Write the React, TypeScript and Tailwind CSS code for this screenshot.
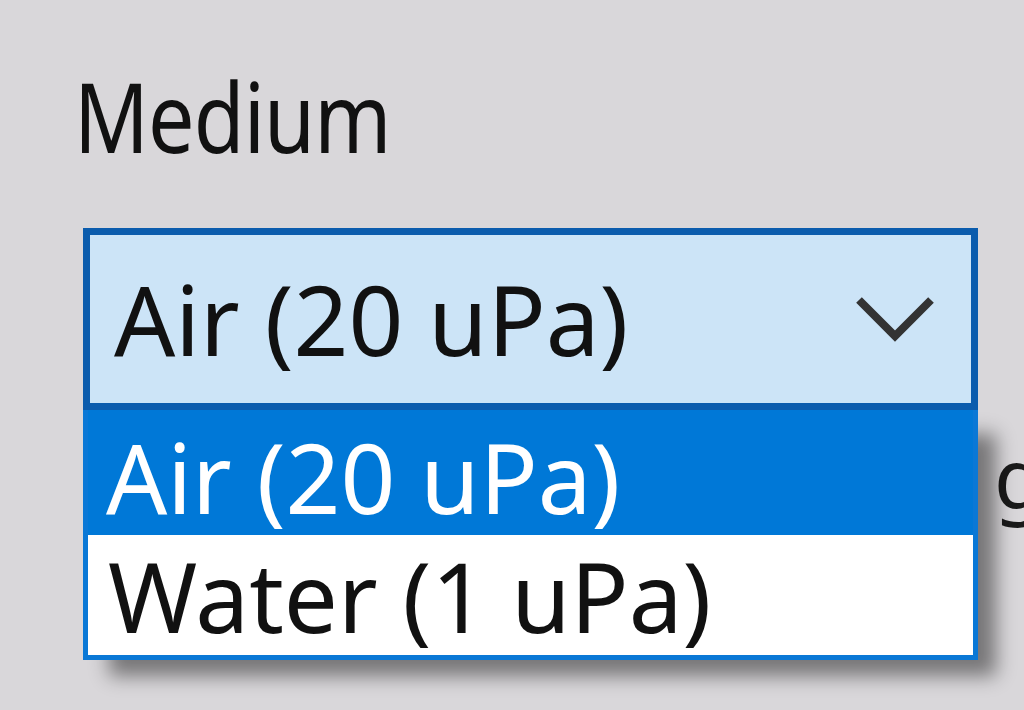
const font = { fontFamily: '"Noto Sans", "Open Sans", sans-serif' };

function Chevron() {
    return (
        <svg width="80" height="50" viewBox="0 0 80 50" fill="none" className="text-[#333]">
            <path
                d="M4 6 L40 42 L76 6"
                stroke="currentColor"
                strokeWidth="8"
                strokeLinejoin="miter"
            />
        </svg>
    );
}

export default function App() {
    const options = ["Air (20 uPa)", "Water (1 uPa)"];
    const selected = 0;

    return (
        <div
            className="relative h-[710px] w-[1024px] overflow-hidden bg-[#d9d7da] text-[96px] text-[#111]"
            style={font}
        >
            {/* label of the field behind the open list */}
            <span className="absolute left-[994px] top-[435px] text-[82px] leading-none text-[#1a1a1a]">
                g
            </span>

            <div className="relative flex flex-col items-start pl-[83px] pt-[68px]">
                <label className="-ml-[9px] inline-block origin-left scale-x-[0.86] leading-none tracking-[-1px]">
                    Medium
                </label>

                <div className="relative mt-[64px] w-[895px]">
                    {/* closed combobox */}
                    <div className="flex h-[182px] items-center justify-between border-[7px] border-[#0b5cad] bg-[#cce4f7] pl-[24px] pr-[36px]">
                        <span className="leading-none">{options[selected]}</span>
                        <Chevron />
                    </div>

                    {/* open list */}
                    <ul className="border-[5px] border-t-0 border-[#0a78d6] bg-white shadow-[22px_20px_18px_-4px_rgba(0,0,0,0.45)]">
                        {options.map((o, i) => (
                            <li
                                key={o}
                                className={
                                    i === selected
                                        ? "h-[125px] bg-[#0078d7] pl-[18px] pt-[12px] leading-[110px] text-white"
                                        : "h-[120px] bg-white pl-[20px] pt-[6px] leading-[110px]"
                                }
                            >
                                {o}
                            </li>
                        ))}
                    </ul>
                </div>
            </div>
        </div>
    );
}
